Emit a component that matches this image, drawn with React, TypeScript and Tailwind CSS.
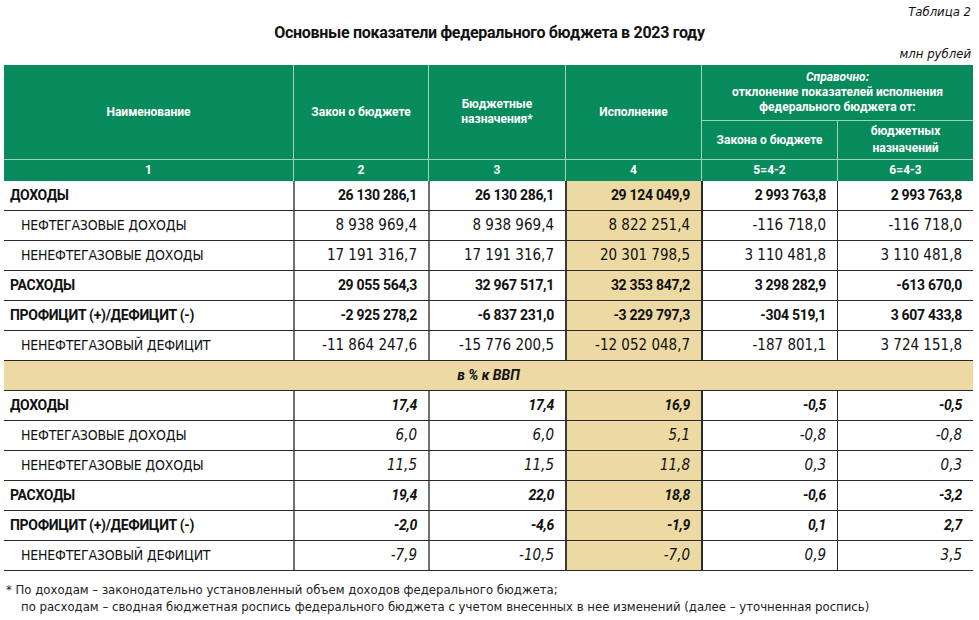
import type { ReactNode } from "react";

type Row = {
  name: string;
  bold?: boolean;
  values: string[];
};

const absRows: Row[] = [
  { name: "ДОХОДЫ", bold: true, values: ["26 130 286,1", "26 130 286,1", "29 124 049,9", "2 993 763,8", "2 993 763,8"] },
  { name: "НЕФТЕГАЗОВЫЕ ДОХОДЫ", values: ["8 938 969,4", "8 938 969,4", "8 822 251,4", "-116 718,0", "-116 718,0"] },
  { name: "НЕНЕФТЕГАЗОВЫЕ ДОХОДЫ", values: ["17 191 316,7", "17 191 316,7", "20 301 798,5", "3 110 481,8", "3 110 481,8"] },
  { name: "РАСХОДЫ", bold: true, values: ["29 055 564,3", "32 967 517,1", "32 353 847,2", "3 298 282,9", "-613 670,0"] },
  { name: "ПРОФИЦИТ (+)/ДЕФИЦИТ (-)", bold: true, values: ["-2 925 278,2", "-6 837 231,0", "-3 229 797,3", "-304 519,1", "3 607 433,8"] },
  { name: "НЕНЕФТЕГАЗОВЫЙ ДЕФИЦИТ", values: ["-11 864 247,6", "-15 776 200,5", "-12 052 048,7", "-187 801,1", "3 724 151,8"] },
];

const gdpRows: Row[] = [
  { name: "ДОХОДЫ", bold: true, values: ["17,4", "17,4", "16,9", "-0,5", "-0,5"] },
  { name: "НЕФТЕГАЗОВЫЕ ДОХОДЫ", values: ["6,0", "6,0", "5,1", "-0,8", "-0,8"] },
  { name: "НЕНЕФТЕГАЗОВЫЕ ДОХОДЫ", values: ["11,5", "11,5", "11,8", "0,3", "0,3"] },
  { name: "РАСХОДЫ", bold: true, values: ["19,4", "22,0", "18,8", "-0,6", "-3,2"] },
  { name: "ПРОФИЦИТ (+)/ДЕФИЦИТ (-)", bold: true, values: ["-2,0", "-4,6", "-1,9", "0,1", "2,7"] },
  { name: "НЕНЕФТЕГАЗОВЫЙ ДЕФИЦИТ", values: ["-7,9", "-10,5", "-7,0", "0,9", "3,5"] },
];

const narrow = "font-['DejaVu_Sans_Condensed','Liberation_Sans_Narrow',sans-serif]";
const strong = "font-['Roboto','Liberation_Sans',sans-serif] font-bold";
const cols = "grid grid-cols-[289px_135px_137px_136px_136px_136px]";

// разделители колонок в теле таблицы
const vline = ["", "border-l-2 border-[#707070]", "border-l-2 border-[#707070]", "border-l-2 border-[#3a3a3a]", "border-l-2 border-[#2a2a2a]", "border-l border-[#2a2a2a]"];

function HeadCell({ children, className = "" }: { children: ReactNode; className?: string }) {
  return (
    <div className={`flex items-center justify-center text-center text-white ${strong} text-[12px] leading-[15px] ${className}`}>
      {children}
    </div>
  );
}

function DataRow({ row, italic }: { row: Row; italic?: boolean }) {
  const num = row.bold ? `${strong} text-[14px] tracking-[-0.3px]` : `${narrow} text-[15px]`;
  const label = row.bold ? `${strong} text-[14px] tracking-[-0.3px] pl-[6px]` : `${narrow} text-[14px] tracking-[-0.2px] pl-[17px]`;
  return (
    <div className={`${cols} h-[30px] border-b border-[#2a2a2a] text-[#111]`}>
      <div className={`flex items-center ${label}`}>{row.name}</div>
      {row.values.map((v, i) => (
        <div
          key={i}
          className={`flex items-center justify-end pr-[11px] ${num} ${vline[i + 1]} ${i === 2 ? "bg-[#ecd9a3]" : ""} ${italic ? "italic" : ""}`}
        >
          {v}
        </div>
      ))}
    </div>
  );
}

export default function App() {
  return (
    <div className={`w-[979px] h-[620px] bg-white overflow-hidden ${narrow} text-[#111]`}>
      <div className="flex justify-end pr-[8px] pt-[3px] text-[13px] italic leading-[18px]">Таблица 2</div>
      <h1 className={`text-center text-[16px] tracking-[-0.3px] leading-[22px] mt-[1px] ${strong}`}>
        Основные показатели федерального бюджета в 2023 году
      </h1>
      <div className="flex justify-end pr-[8px] text-[13px] italic leading-[18px] mt-[1px]">млн рублей</div>

      <div className="ml-[4px] w-[969px] mt-[2px]">
        {/* шапка */}
        <div className={`${cols} grid-rows-[56px_39px_21px] bg-[#078a5c]`}>
          <HeadCell className="row-span-2 border-b border-[#9fd3b8]">Наименование</HeadCell>
          <HeadCell className="row-span-2 border-b border-l border-[#9fd3b8]">Закон о бюджете</HeadCell>
          <HeadCell className="row-span-2 border-b border-l border-[#9fd3b8]">
            Бюджетные
            <br />
            назначения*
          </HeadCell>
          <HeadCell className="row-span-2 border-b border-l border-[#9fd3b8]">Исполнение</HeadCell>
          <HeadCell className="col-span-2 flex-col border-l border-b border-[#9fd3b8]">
            <span className="italic">Справочно:</span>
            <span>отклонение показателей исполнения</span>
            <span>федерального бюджета от:</span>
          </HeadCell>
          <HeadCell className="border-l border-b border-[#9fd3b8]">Закона о бюджете</HeadCell>
          <HeadCell className="border-l border-b border-[#9fd3b8] leading-[17px]">
            бюджетных
            <br />
            назначений
          </HeadCell>
          {["1", "2", "3", "4", "5=4-2", "6=4-3"].map((n, i) => (
            <HeadCell key={n} className={i > 0 ? "border-l border-[#9fd3b8]" : ""}>
              {n}
            </HeadCell>
          ))}
        </div>

        {absRows.map((r) => (
          <DataRow key={r.name} row={r} />
        ))}

        <div className={`h-[30px] bg-[#ecd9a3] border-b border-[#2a2a2a] flex items-center justify-center text-[14px] italic ${strong}`}>
          в % к ВВП
        </div>

        {gdpRows.map((r) => (
          <DataRow key={r.name} row={r} italic />
        ))}
      </div>

      <div className="pl-[6px] pt-[10px] text-[13px] leading-[17px] text-[#222]">
        <div>* По доходам – законодательно установленный объем доходов федерального бюджета;</div>
        <div className="pl-[15px]">по расходам – сводная бюджетная роспись федерального бюджета с учетом внесенных в нее изменений (далее – уточненная роспись)</div>
      </div>
    </div>
  );
}
